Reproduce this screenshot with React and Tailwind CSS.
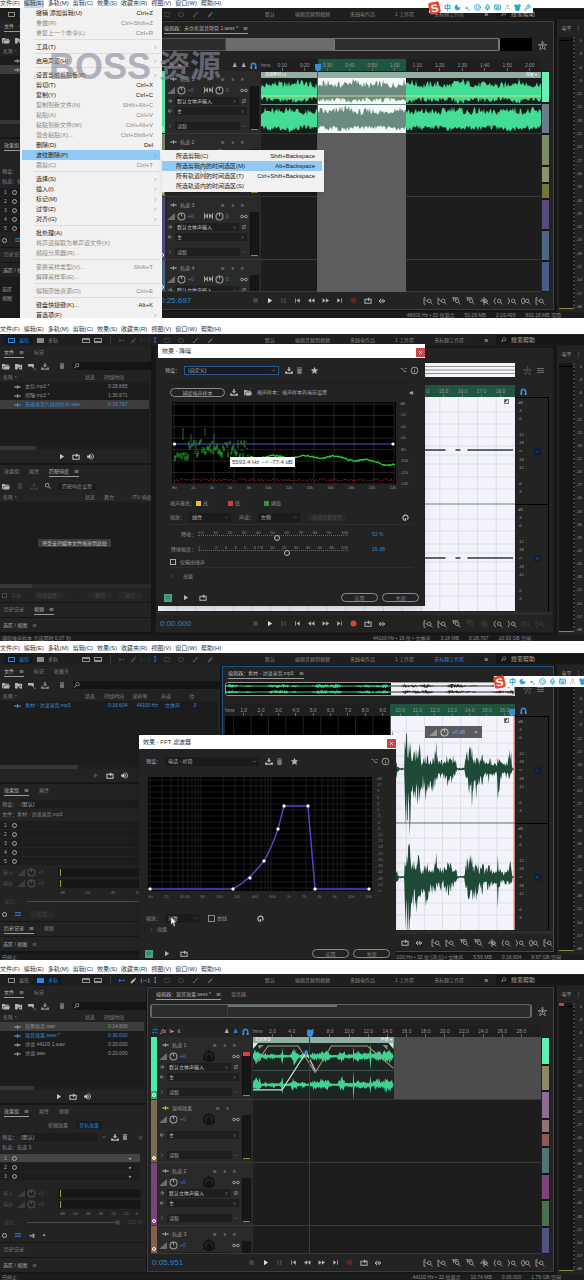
import React from 'react';
import clsx from 'clsx';
import {
  MdFolderOpen,
  MdDelete,
  MdPlayArrow,
  MdStop,
  MdPause,
  MdSkipPrevious,
  MdSkipNext,
  MdFastForward,
  MdFastRewind,
  MdFiberManualRecord,
  MdVolumeUp,
  MdSearch,
  MdStar,
  MdInfoOutline,
  MdMenu,
  MdFileDownload,
  MdEdit,
  MdBrush,
} from 'react-icons/md';
import {
  Moon,
  Smile,
  Mic,
  Keyboard,
  User,
  Shirt,
  Wrench,
  ChevronDown,
  ChevronRight,
  ArrowRight,
  ArrowLeft,
  X,
} from 'lucide-react';

/* ---------- helpers ---------- */

const rand = (n, seed) => {
  const v = Math.sin(n * 12.9898 + seed * 78.233) * 43758.5453;
  return v - Math.floor(v);
};

// env is a list of [x, up, down] points, up and down go from 0 to 1
function envelopePath(env, mid, half, seed, step = 0.7) {
  const top = [];
  const bottom = [];
  const last = env[env.length - 1][0];
  let k = 0;
  for (let x = env[0][0]; x <= last; x += step) {
    while (k < env.length - 2 && x > env[k + 1][0]) k += 1;
    const [x0, u0, d0] = env[k];
    const [x1, u1, d1] = env[k + 1];
    const t = (x - x0) / (x1 - x0 || 1);
    const n = 0.3 + 0.7 * rand(x, seed) ** 1.4;
    const m = 0.3 + 0.7 * rand(x, seed + 11) ** 1.4;
    top.push(`${x.toFixed(1)} ${(mid - Math.max(0.4, (u0 + (u1 - u0) * t) * half * n)).toFixed(1)}`);
    bottom.push(`${x.toFixed(1)} ${(mid + Math.max(0.4, (d0 + (d1 - d0) * t) * half * m)).toFixed(1)}`);
  }
  return `M${top.join('L')}L${bottom.reverse().join('L')}Z`;
}

function bandPath(width, top, bottom, jitter, seed) {
  const a = [];
  const b = [];
  for (let x = 0; x <= width; x += 1) {
    const slow = Math.sin(x / 9 + seed) + Math.sin(x / 4.3 + seed * 2);
    a.push(`${x} ${(top + slow * 1.1 - rand(x, seed) ** 1.6 * jitter).toFixed(1)}`);
    b.push(`${x} ${(bottom - slow * 0.7 + rand(x, seed + 3) ** 1.6 * jitter * 0.7).toFixed(1)}`);
  }
  return `M${a.join('L')}L${b.reverse().join('L')}Z`;
}

const range = (n) => Array.from({ length: n }, (_, i) => i);

/* ---------- small drawings ---------- */

const Knob = ({ className = 'w-[9px] h-[9px]' }) => (
  <svg viewBox="0 0 10 10" className={clsx('shrink-0', className)} fill="none" stroke="currentColor" strokeWidth="1.2">
    <circle cx="5" cy="5" r="3.9" />
    <path d="M5 1v3.6" />
  </svg>
);

const VolumeRamp = () => (
  <svg viewBox="0 0 8 7" className="w-[8px] h-[7px] shrink-0" fill="currentColor">
    <path d="M0 7L8 0V7Z" opacity=".6" />
  </svg>
);

const PanIcon = () => (
  <svg viewBox="0 0 9 6" className="w-[9px] h-[6px] shrink-0" fill="currentColor">
    <path d="M0 0h1v2.5l3-2v5l-3-2V6H0zM9 0H8v2.5l-3-2v5l3-2V6h1z" />
  </svg>
);

const StereoIcon = () => (
  <svg viewBox="0 0 8 5" className="w-[8px] h-[5px] shrink-0" fill="none" stroke="currentColor">
    <circle cx="2" cy="2.5" r="1.3" />
    <circle cx="6" cy="2.5" r="1.3" />
    <path d="M3 2.5h2" />
  </svg>
);

const WaveGlyph = () => (
  <svg viewBox="0 0 7 4" className="w-[7px] h-[4px] shrink-0" stroke="currentColor">
    <path d="M0 2h7M2 1v2M3.5 0v4M5 1v2" strokeWidth=".9" />
  </svg>
);

const FolderIcon = () => (
  <svg viewBox="0 0 9 8" className="w-[8px] h-[7px] shrink-0" fill="currentColor">
    <path d="M0 1h3l1 1h4v1.200H2L.8 7H0z" />
    <path d="M2.400 3.800H9L8 7.300H1.300z" />
  </svg>
);

const ImportIcon = () => (
  <svg viewBox="0 0 9 8" className="w-[8px] h-[7px] shrink-0" fill="currentColor">
    <path d="M0 1h3l1 1h4v5.300H5.500L3 4v3.300H0z" />
    <path d="M4.500 4.200l2 2V4.200z" fill="#232323" />
  </svg>
);

const NewIcon = () => (
  <svg viewBox="0 0 9 8" className="w-[8px] h-[7px] shrink-0" fill="currentColor">
    <path d="M0 1h6.500v5.500L4.200 4H0zM7.500 6.500h1.200v1.200H7.500z" />
  </svg>
);

const TrayIcon = ({ className }) => (
  <svg viewBox="0 0 9 8" className={clsx('w-[8px] h-[7px] shrink-0', className)} fill="currentColor">
    <path d="M3.700 0h1.600v2.600H7L4.500 5.200 2 2.600h1.700zM0 5h2l1 1.200h3L7 5h2v2.800H0z" />
  </svg>
);

const SnapIcon = () => (
  <svg viewBox="0 0 8 8" className="w-[7px] h-[7px] shrink-0" fill="none">
    <path d="M1.500 7.500V4a2.500 2.500 0 0 1 5 0v3.500" stroke="#2f86e0" strokeWidth="1.900" />
    <path d="M.5 7h2M5.500 7h2" stroke="#9fc6f0" strokeWidth="1" />
  </svg>
);

const LoopIcon = () => (
  <svg viewBox="0 0 10 9" className="w-[8px] h-[7px]" fill="none" stroke="currentColor" strokeWidth="1.3">
    <path d="M3 3H1v5h8V3H7M3 3h3M5 1l2.2 2L5 5" />
  </svg>
);

const SkipIcon = () => (
  <svg viewBox="0 0 10 8" className="w-[8px] h-[6px]" fill="none" stroke="currentColor" strokeWidth="1.3">
    <path d="M4 1L1 4l3 3M6 2l3 2-3 2zM1 4h4" />
  </svg>
);

const ResetIcon = () => (
  <svg viewBox="0 0 8 8" className="w-[7px] h-[7px]" fill="none" stroke="currentColor" strokeWidth="1.3">
    <path d="M2 6.5A3 3 0 1 1 6 6.5M4 4.5v2.5H1.8" />
  </svg>
);

const zoomMarks = {
  in: 'M1 1v8M1 1h2M1 9h2M2 3l3 3',
  out: 'M1 1v8M1 1l4 5M1 9h2',
  top: 'M1 1h8M3 1v4M6 1L4 4',
  star: 'M1 5h10M6 0v10M3 2l6 6',
  left: 'M3 1L1 5l2 4',
  right: 'M1 1l2 4-2 4',
  both: 'M2 1L0 5l2 4M3 1l1.5 4L3 9',
};

const ZoomIcon = ({ kind, dim }) => (
  <svg
    viewBox="0 0 12 10"
    className={clsx('w-[10px] h-[8px]', dim ? 'text-[#3d3d3d]' : 'text-[#a0a0a0]')}
    fill="none"
    stroke="currentColor"
    strokeWidth="1.1"
  >
    <path d={zoomMarks[kind]} />
    <circle cx="7.5" cy="4.8" r="2.2" />
    <path d="M9 6.5L11.5 9.3" />
  </svg>
);

const StarBurst = () => (
  <svg viewBox="0 0 10 10" className="w-[9px] h-[9px] shrink-0 text-[#9a9a9a]" fill="none" stroke="currentColor">
    <path d="M5 0l1.200 3.800L9.800 4 7 6.200l1 3.600L5 7.500 2 9.800l1-3.600L.2 4l3.600-.2zM5 3v4M3.500 5h3" strokeWidth=".9" />
  </svg>
);

const SurroundPuck = () => (
  <svg viewBox="0 0 14 14" className="w-[14px] h-[13px] ml-[9px]">
    <circle cx="7" cy="7" r="5.500" fill="#222" stroke="#111" strokeWidth="1.500" />
    <path d="M7 4l3 3.500-1.500 4h-3L4 7.500z" fill="#121212" />
    <circle cx="7" cy="1.500" r="1.200" fill="#111" />
    <circle cx="1.800" cy="10" r="1.200" fill="#111" />
    <circle cx="12.200" cy="10" r="1.200" fill="#111" />
  </svg>
);

const Cursor = ({ className }) => (
  <svg viewBox="0 0 8 12" className={clsx('absolute w-[7px] h-[10px]', className)}>
    <path d="M1 0v9l2-2 1.5 4 1.5-.6L4.500 6.600H7.500Z" fill="#fff" stroke="#555" strokeWidth=".6" />
  </svg>
);

/* ---------- application chrome ---------- */

const menus = ['文件(F)', '编辑(E)', '多轨(M)', '剪辑(C)', '效果(S)', '收藏夹(R)', '视图(V)', '窗口(W)', '帮助(H)'];

function MenuBar({ heightClass, open }) {
  return (
    <nav className={clsx('flex items-end gap-1 bg-white text-[#333] text-[6px] leading-[10px] whitespace-nowrap', heightClass)}>
      {menus.map((m, i) => (
        <button key={m} type="button" className={clsx(open === i && 'bg-[#b9dbf5]')}>
          {m}
        </button>
      ))}
    </nav>
  );
}

const workspaces = ['默认', '编辑音频到视频', '无线电作品', '1 工作区', '无标题工作区'];

function Toolbar({ mode, activeWorkspace }) {
  const modeClass = (m) =>
    clsx('flex items-center gap-1 px-1 h-[9px]', mode === m ? 'text-[#2f86d8] bg-[#121a22]' : 'text-[#8a8a8a]');
  return (
    <div className="flex items-center h-3 bg-[#1f1f1f] whitespace-nowrap">
      <div className="flex items-center w-[265px] shrink-0 pl-1 text-[#8f8f8f]">
        <button type="button" className={modeClass('wave')}>
          <span className="w-[7px] h-[5px] border border-current" />
          波形
        </button>
        <button type="button" className={modeClass('multi')}>
          <span className="w-[7px] h-[5px] bg-current" />
          多轨
        </button>
        <div className="flex items-center gap-1 pl-5 text-[7px]">
          <span className="w-[8px] h-[5px] border border-t-2 border-current" />
          <span className="w-[8px] h-[5px] border border-b-2 border-current" />
          <span className="w-px h-2 mx-1 bg-[#3a3a3a]" />
          <span className={clsx('text-[6px]', mode === 'multi' ? 'text-[#2f86d8]' : 'text-[#4a4a4a]')}>▸+</span>
          <MdEdit className={mode === 'multi' ? 'text-[#ccc]' : 'text-[#4a4a4a]'} />
          <span className={clsx('text-[6px]', mode === 'multi' ? 'text-[#ccc]' : 'text-[#4a4a4a]')}>|↔|</span>
          <span className={clsx('font-serif text-[8px]', mode === 'wave' ? 'text-[#2f86d8]' : 'text-[#999]')}>I</span>
          <span className="w-[6px] h-[5px] ml-1 border border-dashed border-[#3c3c3c]" />
          <span className="w-[6px] h-[5px] ml-1 rounded-full border border-[#4a4a4a]" />
          <MdBrush className="ml-1 text-[#5a5a5a]" />
          <MdEdit className="ml-1 text-[#5a5a5a]" />
        </div>
      </div>
      <div className="flex items-center gap-5 text-[#858585]">
        {workspaces.map((w, i) => (
          <button key={w} type="button" className={clsx(activeWorkspace === i && 'text-[#2f86d8]')}>
            {w}
          </button>
        ))}
        <span className="text-[#ccc] text-[7px]">»</span>
      </div>
      <label className="flex flex-1 items-center gap-1 min-w-0 ml-2 pl-1 h-[10px] bg-[#161616]">
        <MdSearch className="text-[8px] text-[#aaa] -scale-x-100" />
        <input
          type="text"
          placeholder="搜索帮助"
          aria-label="搜索帮助"
          className="w-full bg-transparent outline-none text-[6px] placeholder:text-[#a5a5a5]"
        />
      </label>
    </div>
  );
}

function Tabs({ items, active }) {
  return (
    <div className="flex items-center gap-[10px] h-[14px] shrink-0 pl-1 whitespace-nowrap">
      {items.map((t, i) => (
        <button
          key={t}
          type="button"
          className={clsx(
            'flex items-center gap-[5px] h-[10px] border-b',
            i === active ? 'text-[#b5b5b5] border-[#9a9a9a]' : 'text-[#808080] border-transparent',
          )}
        >
          {t}
          {i === active && <MdMenu className="text-[5px]" />}
        </button>
      ))}
    </div>
  );
}

function StatusBar({ left, values, className }) {
  return (
    <footer className={clsx('flex items-center gap-[10px] h-[6px] bg-[#1c1c1c] text-[#8a8a8a] overflow-hidden', className)}>
      <span className="flex-1 pl-[2px]">{left}</span>
      {values.map((v) => (
        <span key={v}>{v}</span>
      ))}
    </footer>
  );
}

const levels = ['0', ...range(19).map((i) => `-${(i + 1) * 3}`), 'dB'];

function LevelPanel({ clipped }) {
  return (
    <aside className="flex flex-col w-[27px] shrink-0 ml-[3px] bg-[#232323] text-[#9a9a9a]">
      <div className="flex items-center justify-around h-4 shrink-0 pl-[2px]">
        电平 <span>⋮</span>
      </div>
      <div className="flex flex-1 min-h-0 pb-[3px]">
        <div className="flex flex-col w-4 ml-[2px] mt-[1px] bg-[#161616] border-r-2 border-dotted border-[#3f3f3f]">
          <div className={clsx('w-[5px] h-[3px]', clipped && 'bg-[#d33]')} />
          <div className="flex-1 border-t border-black" />
          <div className="h-px bg-[#8e8a3c]" />
        </div>
        <div className="flex flex-1 flex-col justify-between items-end pt-[3px] pr-[2px] text-[4px] leading-[4px]">
          {levels.map((l) => (
            <span key={l}>{l}</span>
          ))}
        </div>
      </div>
    </aside>
  );
}

const imeIcons = [Smile, Mic, Keyboard, User, Shirt, Wrench];

function ImeBar({ className }) {
  return (
    <div className={clsx('absolute flex items-center h-[11px] bg-white text-[#23a6c8]', className)}>
      <span className="flex items-center justify-center w-[11px] h-[12px] mr-1 -rotate-12 rounded-[2px] bg-[#e2492f] text-white text-[11px] leading-none font-bold">
        S
      </span>
      <div className="flex items-center gap-[3px] pr-[2px] text-[7px] font-bold">
        <span>中</span>
        <Moon className="w-[7px] h-[7px] fill-current" />
        <span className="w-[7px] text-center">•,</span>
        {imeIcons.map((Icon, i) => (
          <Icon key={i} className={clsx('w-[7px] h-[7px]', i === 3 && 'text-[#bbb]', i === 4 && 'fill-current')} strokeWidth={3} />
        ))}
      </div>
    </div>
  );
}

/* ---------- left column ---------- */

function FilesPanel({ tabs, files, columns, scroll, playDim }) {
  return (
    <section className="flex flex-col bg-[#232323] border-b-2 border-[#161616] overflow-hidden whitespace-nowrap">
      <Tabs items={tabs} active={0} />
      <div className="flex items-center gap-[5px] h-3 pl-[2px] text-[8px] text-[#b5b5b5]">
        <FolderIcon />
        <ImportIcon />
        <NewIcon />
        <TrayIcon className="text-[#8a8a8a]" />
        <MdDelete className="ml-1 text-[#707070]" />
        <label className="flex flex-1 items-center ml-[2px] h-[8px] bg-[#141414]">
          <MdSearch className="-scale-x-100" />
          <input type="text" aria-label="搜索文件" className="w-full min-w-0 bg-transparent outline-none text-[5px]" />
        </label>
      </div>
      <div className="h-[74px] mr-[2px] bg-[#1c1c1c] overflow-hidden">
        <table className="w-full table-fixed text-left">
          <thead>
            <tr className="h-[10px] text-[#858585] bg-[#222]">
              <th className="w-[85px] pl-[3px] font-normal">名称 ↑</th>
              <th className="w-[19px] font-normal">状态</th>
              {columns.map((c) => (
                <th key={c} className="font-normal">{c}</th>
              ))}
            </tr>
          </thead>
          <tbody>
            {files.map((f) => (
              <tr
                key={f.name}
                className={clsx('h-[9px]', f.selected && 'bg-[#3d3d3d]', f.open ? 'text-[#3a8ddb]' : 'text-[#949494]')}
              >
                <td>
                  <span className="flex items-center gap-1 pl-[14px]">
                    <WaveGlyph />
                    {f.name}
                  </span>
                </td>
                <td />
                {f.values.map((v) => (
                  <td key={v} className="pl-[4px]">{v}</td>
                ))}
              </tr>
            ))}
          </tbody>
        </table>
      </div>
      <div className="flex h-1 bg-[#1f1f1f]">
        <div className={clsx('bg-[#363636]', scroll)} />
      </div>
      <div className="flex items-center justify-center gap-[6px] h-[13px] text-[9px] text-[#c5c5c5]">
        <MdPlayArrow className={clsx(playDim && 'text-[#4a4a4a]')} />
        <LoopIcon />
        <MdVolumeUp />
      </div>
    </section>
  );
}

function LoudnessPanel() {
  return (
    <section className="flex flex-col h-[137px] bg-[#232323] overflow-hidden whitespace-nowrap">
      <Tabs items={['效果组', '属性', '匹配响度']} active={2} />
      <div className="flex items-center gap-[6px] h-[14px] pl-[2px] text-[8px] text-[#b5b5b5]">
        <FolderIcon />
        <MdDelete className="text-[#404040]" />
        <TrayIcon className="text-[#404040]" />
        <MdSearch />
        <button type="button" className="px-1 text-[5px] text-[#8a8a8a] bg-[#1b1b1b]">匹配响度设置</button>
      </div>
      <table className="w-full table-fixed text-left text-[#858585]">
        <thead>
          <tr className="h-[9px]">
            <th className="w-[85px] pl-[3px] font-normal">名称 ↑</th>
            <th className="w-[19px] font-normal">状态</th>
            <th className="w-[28px] font-normal">舞台</th>
            <th className="font-normal">ITU 响度</th>
          </tr>
        </thead>
      </table>
      <div className="flex flex-1 items-center justify-center mr-[2px] bg-[#1c1c1c]">
        <span className="px-1 leading-[8px] rounded-[1px] bg-[#3c3c3c] text-[#c0c0c0]">将受支持媒体文件拖放到此处</span>
      </div>
      <div className="flex h-[4px] bg-[#2b2b2b]">
        <div className="w-8 bg-[#383838]" />
      </div>
      <div className="flex items-center gap-1 h-[14px] pl-[2px] text-[#4a4a4a]">
        <input id="export" type="checkbox" className="appearance-none w-[5px] h-[5px] border border-[#4a4a4a]" />
        <label htmlFor="export">导出</label>
        <button type="button" className="ml-2 px-1 rounded-full bg-[#282828]">导出设置...</button>
        <button type="button" className="ml-auto px-2 rounded-full bg-[#282828]">撤消</button>
        <button type="button" className="mr-2 px-2 rounded-full bg-[#282828]">运行</button>
      </div>
    </section>
  );
}

function RackFader({ label }) {
  return (
    <div className="flex items-center h-[11px] pl-[3px] text-[#4f4f4f]">
      <span className="w-[14px]">{label}</span>
      <VolumeRamp />
      <Knob className="w-[9px] h-[9px] ml-[2px]" />
      <span className="w-[22px] pl-[2px]">+0</span>
      <div className="flex-1 h-[9px] mr-[5px] border border-[#1a1a1a] bg-[#161616]">
        <div className="w-px h-full ml-px bg-[#a8a02c]" />
      </div>
    </div>
  );
}

function EffectsRack({ tabs, toggle, source, rows, selected, compact }) {
  return (
    <section className={clsx('flex flex-col bg-[#232323] overflow-hidden whitespace-nowrap', !compact && 'h-[137px]')}>
      <Tabs items={tabs} active={0} />
      {toggle && (
        <div className="flex items-center justify-center gap-1 h-3 text-[#888]">
          <button type="button" className="px-1">剪辑效果</button>
          <button type="button" className="px-[3px] leading-[8px] bg-[#141c26] text-[#2f86d8]">音轨效果</button>
        </div>
      )}
      <div className="flex items-center h-3 pl-[2px] text-[#888]">
        <label htmlFor={`preset-${source}`}>预设：</label>
        <select
          id={`preset-${source}`}
          className="flex-1 min-w-0 ml-1 h-[8px] leading-[8px] appearance-none bg-[#1c1c1c] text-[#aaa]"
        >
          <option>(默认)</option>
        </select>
        <ChevronDown className="w-[6px] h-[6px] mx-1" />
        <TrayIcon className="text-[#b0b0b0]" />
        <MdDelete className="ml-[2px] text-[8px]" />
        <MdStar className="ml-2 mr-[2px] text-[7px] text-[#444]" />
      </div>
      <p className="h-[9px] leading-[9px] pl-[2px] text-[#8a8a8a]">{source}</p>
      <ol className="flex-1 mt-[2px] mr-[6px] overflow-hidden">
        {range(rows).map((i) => (
          <li
            key={i}
            className={clsx(
              'flex items-center gap-[5px] h-[9px] pl-1 border-b border-[#232323] text-[#a5a5a5]',
              i === selected ? 'bg-[#454545]' : 'bg-[#1d1d1d]',
            )}
          >
            <span>{i + 1}</span>
            <span className="w-[5px] h-[5px] rounded-full border border-current" />
            <span className="ml-auto pr-2">▸</span>
          </li>
        ))}
      </ol>
      {!compact && (
        <>
          <RackFader label="输入" />
          <RackFader label="输出" />
          <div className="flex justify-between h-[7px] pl-[60px] pr-2 text-[4px] text-[#777]">
            {['dB', '-54', '-48', '-36', '-24', '-12', '0'].map((t) => (
              <span key={t}>{t}</span>
            ))}
          </div>
          <div className="flex items-center gap-2 h-[11px] px-1 text-[#484848]">
            混合：
            <input
              type="range"
              aria-label={`混合 ${source}`}
              defaultValue="100"
              className="flex-1 min-w-0 h-px appearance-none bg-[#4a4a4a] [&::-webkit-slider-thumb]:appearance-none [&::-webkit-slider-thumb]:w-[5px] [&::-webkit-slider-thumb]:h-[5px] [&::-webkit-slider-thumb]:rounded-full [&::-webkit-slider-thumb]:bg-[#444]"
            />
            100 %
          </div>
        </>
      )}
      <div className="flex items-center gap-[7px] h-[14px] pl-[2px] text-[#aaa]">
        <span className="w-[5px] h-[5px] rounded-full border border-current" />
        <MdMenu className="text-[8px] text-[#2f86d8]" />
        {toggle ? (
          <>
            <span>◂▮</span>
            <span>✦</span>
          </>
        ) : (
          <button type="button" className="px-2 rounded-full bg-[#292929] text-[#444]">应用</button>
        )}
      </div>
    </section>
  );
}

function BottomTabs({ tabs, active }) {
  return (
    <div className="whitespace-nowrap overflow-hidden">
      <div className="mt-px bg-[#232323]">
        <Tabs items={tabs} active={active} />
      </div>
      <div className="flex items-center gap-[5px] h-[14px] mt-px pl-[3px] bg-[#232323] text-[#aaa]">
        选区 / 视图 <MdMenu className="text-[#777]" />
      </div>
    </div>
  );
}

/* ---------- editors ---------- */

function Transport({ time, dimFrom = 9, recordActive, className }) {
  const kinds = ['in', 'out', 'top', 'top', 'star', 'left', 'right', 'both', 'in'];
  const buttons = [
    ['停止', <MdStop className="text-[#484848]" />],
    ['播放', <MdPlayArrow className="text-[#ddd]" />],
    ['暂停', <MdPause className="text-[#484848]" />],
    ['上一个', <MdSkipPrevious />],
    ['快退', <MdFastRewind />],
    ['快进', <MdFastForward />],
    ['下一个', <MdSkipNext />],
    ['录制', <MdFiberManualRecord className={recordActive ? 'text-[#e0433c]' : 'text-[#5e2420]'} />],
    ['循环', <LoopIcon />],
    ['跳过', <SkipIcon />],
  ];
  return (
    <div className={clsx('flex items-center h-[17px] overflow-hidden', className)}>
      <span className="w-[56px] shrink-0 pl-[2px] text-[8px] text-[#2f86d8]">{time}</span>
      <div className="flex flex-1 justify-center gap-[5px] text-[9px] text-[#b0b0b0]">
        {buttons.map(([label, icon]) => (
          <button key={label} type="button" aria-label={label} className="flex items-center justify-center w-[9px] h-[9px] shrink-0">
            {icon}
          </button>
        ))}
      </div>
      <div className="flex gap-1 shrink-0">
        {kinds.map((k, i) => (
          <ZoomIcon key={i} kind={k} dim={(i >= dimFrom && i < dimFrom + 2) || (dimFrom < 9 && i > 6)} />
        ))}
      </div>
    </div>
  );
}

function Ruler({ labels, tail, selection, marker }) {
  return (
    <div className="relative flex flex-1 h-3 bg-[#1f1f1f] text-[#969696] text-[5px] leading-[6px] overflow-hidden">
      {selection && (
        <div
          className="absolute inset-y-0 bg-[#1f5640]"
          style={{ left: `${selection[0]}%`, width: `${selection[1] - selection[0]}%` }}
        />
      )}
      <span className="relative w-[10px] shrink-0 pt-[3px]">hms</span>
      {labels.map((l) => (
        <span key={l} className="relative flex flex-1 flex-col items-center justify-end min-w-0">
          {l}
          <span className="w-px h-[3px] bg-[#6a6a6a]" />
        </span>
      ))}
      <span className={clsx('shrink-0', tail)} />
      {marker !== undefined && (
        <div className="absolute bottom-0 w-[6px] h-[7px] -ml-[3px] rounded-t-[1px] rounded-b-full bg-[#3b8be0]" style={{ left: `${marker}%` }} />
      )}
    </div>
  );
}

function Track({ track, surround, clip }) {
  const { name, strip, stripBody, dot, bus, height = 'h-[63px]' } = track;
  return (
    <div className={clsx('flex shrink-0 overflow-hidden border-b border-[#383838]', height)}>
      <div className={clsx('flex flex-col justify-between items-center w-[6px] shrink-0', strip)}>
        <span className={clsx('w-full flex-1', stripBody)} />
        <span className={clsx('w-[4px] h-[4px] my-[2px] rounded-full border border-white', dot)} />
      </div>
      <div className="w-[96px] shrink-0 flex bg-[#2a2a2a] text-[#9a9a9a]">
        <div className="flex flex-col w-[84px] pl-[2px] pt-[3px]">
          <div className="flex items-center h-[10px] shrink-0 pl-[3px]">
            <span className={clsx(bus && 'text-[#d6b52a]')}><WaveGlyph /></span>
            <span className="pl-[3px]">{name}</span>
            <span className="ml-auto flex gap-[7px] pr-[5px] text-[4px]">
              <span>M</span>
              <span>S</span>
              <span>{bus ? '' : 'R'}</span>
            </span>
          </div>
          <div className="flex items-center gap-[2px] h-[12px] shrink-0">
            <VolumeRamp />
            <Knob />
            <span className="w-[11px] text-[#2f86d8]">+0</span>
            {surround ? (
              <SurroundPuck />
            ) : (
              <>
                <span className="ml-[3px]"><PanIcon /></span>
                <Knob />
                <span className="text-[#2f86d8]">0</span>
              </>
            )}
            <span className="ml-auto pr-px"><StereoIcon /></span>
          </div>
          {!bus && (
            <div className="flex items-center h-[10px] shrink-0">
              <ArrowRight className="w-[6px] h-[6px]" strokeWidth={3} />
              <button type="button" className="flex flex-1 items-center justify-between h-[8px] ml-[2px] px-[2px] bg-[#1e1e1e] text-[#c5c5c5]">
                默认立体声输入
                <ChevronRight className="w-[5px] h-[5px]" />
              </button>
              <span className="w-[10px] text-center">Ø</span>
            </div>
          )}
          <div className={clsx('flex items-center h-[10px] shrink-0', bus && 'mt-[5px]')}>
            <ArrowLeft className="w-[6px] h-[6px]" strokeWidth={3} />
            <button type="button" className="flex flex-1 items-center justify-between h-[8px] mx-[2px] px-[2px] bg-[#1e1e1e] text-[#c5c5c5]">
              主
              <ChevronRight className="w-[5px] h-[5px]" />
            </button>
          </div>
          <div className="flex items-center h-[10px] shrink-0 mt-auto mb-[2px]">
            <ChevronRight className="w-[6px] h-[6px]" />
            <select aria-label={`${name} 自动化`} className="flex-1 min-w-0 h-[8px] leading-[8px] ml-[2px] px-[2px] appearance-none bg-[#1e1e1e] text-[#aaa]">
              <option>读取</option>
            </select>
            <ChevronDown className="w-[5px] h-[5px] mx-[2px]" />
          </div>
        </div>
        <div className="flex flex-col w-[9px] h-[44px] shrink-0 mt-[15px] ml-px bg-[#171717] border-x border-[#111]">
          {clip && surround && <span className="h-1 bg-[#e03a48]" />}
          <span className="h-px mt-auto bg-[#8e8a3c]" />
        </div>
      </div>
      <div className="flex-1 min-w-0 bg-[#1d1d1d]">{clip}</div>
    </div>
  );
}

function MultitrackEditor({ tabs, overview, toolsActive, ruler, tracks, surround, clip, segments, listHeight, overlay, time }) {
  return (
    <main className="flex flex-1 flex-col min-w-0 mt-px mb-[2px] bg-[#232323] border border-[#24416b]">
      <div className="h-4 pl-1">
        <Tabs items={tabs} active={0} />
      </div>
      <div className="flex items-center">
        {overview}
        <span className="w-[21px] flex justify-center"><StarBurst /></span>
      </div>
      <div className="flex mt-[7px]">
        <div className="flex items-center gap-[3px] w-[105px] shrink-0 pl-1 text-[#b0b0b0] text-[6px]">
          <span className={clsx(toolsActive && 'text-[#2f86d8]')}>⇄</span>
          <span className="font-serif italic text-[7px]">fx</span>
          <span>ŀ▸</span>
          <span>ıl.</span>
          <span className="flex items-center gap-1 ml-auto pr-1">
            <span>♟</span>
            <span className={clsx(toolsActive && 'text-[#2f86d8]')}>♟</span>
            <SnapIcon />
          </span>
        </div>
        {ruler}
        <span className="w-3 shrink-0" />
      </div>
      <div className={clsx('flex pl-[3px]', listHeight)}>
        <div className="relative flex flex-col flex-1 min-w-0 overflow-hidden bg-[#1d1d1d]">
          {tracks.map((t, i) => (
            <Track key={t.name} track={t} surround={surround} clip={i === 0 ? clip : null} />
          ))}
          <div className="absolute inset-y-0 left-[102px] right-0 pointer-events-none">{overlay}</div>
        </div>
        <div className="flex flex-col gap-[2px] w-[7px] pt-px pb-px ml-px mr-[4px] bg-[#151515]">
          {segments.map(([grow, color], i) => (
            <span key={i} className={color} style={{ flexGrow: grow, flexBasis: 0 }} />
          ))}
        </div>
      </div>
      <Transport time={time} className="pl-[2px] pr-[8px]" />
    </main>
  );
}

const scaleMarks = ['dB', '-3', '-6', '', '-12', '-18', '-∞', '-18', '-12', '', '-6', '-3'];

function AmplitudeScale({ channel }) {
  return (
    <div className="flex flex-1 border-t border-black text-[#9a9a9a]">
      <div className="flex flex-col justify-between w-[12px] pt-[2px] pb-[10px] pl-[3px] text-[4px] leading-[5px]">
        {scaleMarks.map((m, i) => (
          <span key={i} className="h-[5px]">{m}</span>
        ))}
      </div>
      <span className="m-auto px-[2px] rounded-[1px] bg-[#101c30] text-[#2f6fb5] text-[4px]">{channel}</span>
    </div>
  );
}

function WaveEditor({ title, overview, ruler, view, time, focused, transport, dimFrom, recordActive }) {
  return (
    <main
      className={clsx(
        'flex flex-1 flex-col min-w-0 mt-px mb-[2px] bg-[#232323] border',
        focused ? 'border-[#24517c]' : 'border-[#1a1a1a]',
      )}
    >
      <div className="h-[15px] pl-px whitespace-nowrap">
        <Tabs items={[title]} active={0} />
      </div>
      <div className="flex items-center">
        <div className="flex-1 h-[14px] ml-[2px]">{overview}</div>
        <div className="flex items-center gap-[4px] w-[38px] pl-2 text-[#888]">
          <span className="opacity-40"><StarBurst /></span>
          <MdMenu className="text-[9px]" />
        </div>
      </div>
      <div className="flex mt-[8px] ml-[2px]">
        {ruler}
        <span className="flex items-center w-[38px] pl-[5px]">
          <SnapIcon />
        </span>
      </div>
      <div className="flex h-[214px] ml-[2px]">
        <div className="relative flex-1 min-w-0">{view}</div>
        <div className="flex flex-col w-[34px] mr-1 border-r border-black">
          <AmplitudeScale channel="L" />
          <AmplitudeScale channel="R" />
        </div>
      </div>
      <div className="h-[3px] mt-px bg-[#2c2c2c]" />
      <Transport time={time} dimFrom={dimFrom} recordActive={recordActive} className={transport} />
    </main>
  );
}

function LightGrid({ columns }) {
  return (
    <g stroke="#dedee8" strokeWidth="1">
      {range(columns).map((i) => (
        <path key={`v${i}`} d={`M${(i + 1) * (360 / columns)} 0V214`} vectorEffect="non-scaling-stroke" />
      ))}
      {[15, 27, 40, 49, 58, 67, 80, 92, 122, 134, 147, 156, 165, 174, 187, 199].map((y) => (
        <path key={y} d={`M0 ${y}H360`} vectorEffect="non-scaling-stroke" />
      ))}
    </g>
  );
}

const CornerHandle = () => (
  <span className="absolute right-[6px] top-[2px] w-[5px] h-[5px] border border-[#777] bg-[linear-gradient(135deg,#444_50%,#ddd_50%)]" />
);

/* ---------- dialogs ---------- */

function Dialog({ title, className, children }) {
  return (
    <div role="dialog" aria-label={title} className={clsx('absolute flex flex-col bg-[#232323] text-[#8f8f8f] shadow-lg whitespace-nowrap', className)}>
      <div className="flex items-start justify-between h-[14px] shrink-0 bg-white text-[#333] text-[6px] leading-[14px]">
        <span className="pl-1">{title}</span>
        <button type="button" aria-label="关闭窗口" className="flex items-center justify-center w-[9px] h-[9px] mt-1 bg-[#c9474b] text-white">
          <X className="w-[5px] h-[5px]" strokeWidth={3} />
        </button>
      </div>
      {children}
    </div>
  );
}

function Dropdown({ id, label, value, className }) {
  return (
    <>
      <label htmlFor={id}>{label}</label>
      <span className={clsx('flex items-center h-[9px] ml-1 pr-[2px] bg-[#1b1b1b]', className)}>
        <select id={id} className="flex-1 min-w-0 h-[7px] leading-[7px] pl-[3px] appearance-none bg-transparent text-[#b5b5b5] outline-none">
          <option>{value}</option>
        </select>
        <ChevronDown className="w-[5px] h-[5px]" />
      </span>
    </>
  );
}

function DialogPreset({ id, value, className }) {
  return (
    <div className="flex items-center h-6 pl-[7px] pr-[6px] text-[9px] text-[#b5b5b5]">
      <div className="flex items-center text-[5px]">
        <Dropdown id={id} label="预设：" value={value} className={className} />
      </div>
      <span className="ml-[6px]"><TrayIcon /></span>
      <MdDelete className="ml-[2px] text-[#777]" />
      <MdStar className="ml-[6px]" />
      <span className="ml-auto mr-[3px] text-[6px]">⌥</span>
      <MdInfoOutline />
    </div>
  );
}

function DialogFooter({ className }) {
  const pill = 'w-[37px] h-[9px] rounded-full border border-[#8a8a8a] leading-[6px]';
  return (
    <div className={clsx('flex items-center gap-[9px] h-[17px] mt-auto px-[6px] text-[9px] text-[#b5b5b5]', className)}>
      <span className="flex items-center justify-center w-[8px] h-[8px] bg-[#42a385] text-[5px] text-[#17483a]">⏻</span>
      <MdPlayArrow />
      <LoopIcon />
      <div className="flex gap-[4px] ml-auto text-[5px] text-[#8a8a8a]">
        <button type="button" className={pill}>应用</button>
        <button type="button" className={pill}>关闭</button>
      </div>
    </div>
  );
}

const spectrum = range(146).map((i) => {
  const x = 78 + i;
  const drop = x > 160 ? (x - 160) * 0.12 : 0;
  return `${x} ${(54 + drop + Math.sin(i / 5) * 1.2 + rand(i, 2) * 1.5 + (x > 208 ? 1 : 0)).toFixed(1)}`;
});

function NoiseGraph() {
  return (
    <svg viewBox="0 0 224 82" preserveAspectRatio="none" className="w-full h-[82px] bg-black">
      <g stroke="#333" strokeWidth=".7">
        {range(12).map((i) => <path key={`v${i}`} d={`M${2 + i * 20} 0V82`} />)}
        {range(8).map((i) => <path key={`h${i}`} d={`M0 ${2 + i * 11.4}H222`} />)}
      </g>
      <path d={`M2 ${82 - 3}` + range(220).map((i) => `L${2 + i} ${(79.5 - rand(i, 5) * 3).toFixed(1)}`).join('')} fill="none" stroke="#9c1f22" strokeWidth=".9" strokeDasharray="2 1" />
      <g stroke="#25b52b" strokeWidth="1">
        {range(74).map((i) => {
          const x = 3 + i;
          const peak = (x > 16 && x < 34) || (x > 60 && x < 76) ? 16 : x > 34 ? 12 : 4;
          const y = 54 - rand(i, 7) * peak + (x > 25 && x < 60 ? -4 : 0);
          return <path key={i} d={`M${x} ${y}v${(1 + rand(i, 9) * 5).toFixed(1)}`} />;
        })}
        {[11, 19, 24, 33, 42, 66].map((x, i) => (
          <path key={x} d={`M${x} ${26 + (i % 3) * 6}v${12 - (i % 2) * 4}`} stroke="#1b6e2a" />
        ))}
      </g>
      <path d={`M${spectrum.join('L')}`} fill="none" stroke="#27d42c" strokeWidth="1.3" />
      <path d="M2 42H221" stroke="#5252c8" strokeWidth="1.2" />
      <circle cx="2.500" cy="42" r="1.600" fill="#fff" />
      <circle cx="221" cy="42" r="1.600" fill="#fff" />
    </svg>
  );
}

function DialogSlider({ id, label, ticks, value, display }) {
  return (
    <div className="flex items-center h-[15px]">
      <label htmlFor={id} className="w-[28px] pr-[2px] text-right">{label}</label>
      <div className="flex flex-col w-[150px]">
        <div className="flex justify-between text-[4px] leading-[5px]">
          {ticks.map((t, i) => (
            <span key={i}>{t}</span>
          ))}
        </div>
        <input
          id={id}
          type="range"
          defaultValue={value}
          className="w-full h-[5px] appearance-none bg-transparent border-t border-dotted border-[#666] [&::-webkit-slider-thumb]:appearance-none [&::-webkit-slider-thumb]:w-[6px] [&::-webkit-slider-thumb]:h-[6px] [&::-webkit-slider-thumb]:rounded-full [&::-webkit-slider-thumb]:border [&::-webkit-slider-thumb]:border-solid [&::-webkit-slider-thumb]:border-[#bbb] [&::-webkit-slider-thumb]:bg-[#232323]"
        />
      </div>
      <span className="pl-6 text-[#3583c9]">{display}</span>
    </div>
  );
}

function NoiseDialog() {
  return (
    <Dialog title="效果 - 降噪" className="left-[158px] top-[26px] w-[267px] h-[262px]">
      <DialogPreset id="noise-preset" value="(自定义)" className="w-[95px] border border-[#2b5590]" />
      <div className="flex items-center h-[20px] ml-3 mr-3 border-t border-[#1b1b1b] text-[#b5b5b5]">
        <button type="button" className="w-[55px] h-[9px] mr-[5px] rounded-full border border-[#8a8a8a] leading-[6px] text-[#aaa]">捕捉噪声样本</button>
        <TrayIcon />
        <span className="ml-[6px]"><FolderIcon /></span>
        <span className="pl-[5px] text-[#aaa]">噪声样本：噪声样本的当前设置</span>
        <span className="ml-auto text-[4px] text-[#bbb]">◂▮</span>
      </div>
      <div className="flex ml-[14px] mr-3">
        <div className="w-[224px]">
          <NoiseGraph />
          <div className="flex justify-between h-[8px] text-[4px] leading-[8px]">
            {['Hz', '2k', '4k', '6k', '8k', '10k', '12k', '14k', '16k', '18k', '20k', '22k'].map((t) => (
              <span key={t}>{t}</span>
            ))}
          </div>
        </div>
        <div className="flex flex-col justify-between h-[84px] pl-1 text-[4px] leading-[4px]">
          {['dB', '-20', '-40', '-60', '-80', '-100', '-120', '-140'].map((t) => (
            <span key={t}>{t}</span>
          ))}
        </div>
      </div>
      <div className="flex items-center h-[15px] mt-1 pl-3">
        噪声基底：
        <span className="w-[5px] h-[5px] ml-px mr-[2px] bg-[#e8bd3c]" />高
        <span className="w-[5px] h-[5px] ml-5 mr-[2px] bg-[#d83a3a]" />低
        <span className="w-[5px] h-[5px] ml-6 mr-[2px] bg-[#2b9a35]" />阈值
      </div>
      <div className="flex items-center h-[13px] pl-3 pr-4">
        <Dropdown id="noise-scale" label="缩放：" value="线性" className="w-[42px]" />
        <span className="w-2" />
        <Dropdown id="noise-channel" label="声道：" value="左侧" className="w-[42px]" />
        <button type="button" className="ml-2 px-1 rounded-full bg-[#2a2a2a] text-[#4a4a4a]">选择完整文件</button>
        <span className="ml-auto text-[#bbb]"><ResetIcon /></span>
      </div>
      <div className="mx-3 pt-[2px] border-t border-[#2e2e2e]">
        <DialogSlider
          id="noise-reduce"
          label="降噪："
          ticks={['0 0', '10', '20', '30', '40', '50', '60', '70', '80', '90', '100']}
          value="53"
          display="53 %"
        />
        <DialogSlider
          id="noise-amount"
          label="降噪幅度："
          ticks={['1', '', '2', '3', '4', '5', '6 7 8', '10', '20', '30', '40', '60', '80', '100']}
          value="60"
          display="16 dB"
        />
      </div>
      <div className="flex items-center gap-1 h-[10px] pl-3">
        <input id="noise-only" type="checkbox" className="appearance-none w-[6px] h-[6px] border border-[#aaa]" />
        <label htmlFor="noise-only">仅输出噪声</label>
      </div>
      <button type="button" className="flex items-center gap-2 h-[18px] mx-3 border-t border-[#2e2e2e]">
        <ChevronRight className="w-[5px] h-[5px]" />
        高级
      </button>
      <DialogFooter />
      <div className="absolute left-[72px] top-[113px] px-[2px] bg-white text-[#444] text-[6px] leading-[10px]">
        5593.4 Hz --&gt; -77.4 dB
      </div>
    </Dialog>
  );
}

const fftPoints = [[2, 112], [85, 112], [102, 101], [116, 84], [130, 52], [136, 29], [160, 29], [167, 112], [221, 112]];
const fftLines = [2, 14, 23, 30, 35, 40, 44, 47, 50, 53, 75, 87, 96, 103, 108, 113, 117, 120, 123, 145, 158, 167, 174, 180, 185, 189, 193, 196, 218];

function FftDialog() {
  return (
    <Dialog title="效果 - FFT 滤波器" className="left-[139px] top-[94px] w-[257px] h-[224px]">
      <DialogPreset id="fft-preset" value="电话 - 听筒" className="w-[94px]" />
      <div className="flex ml-[9px] mt-[4px]">
        <div className="w-[224px]">
          <svg viewBox="0 0 224 114" className="w-full h-[114px] bg-black">
            <g stroke="#252525" strokeWidth=".7">
              {fftLines.map((x) => <path key={x} d={`M${x} 0V114`} />)}
              {range(19).map((i) => <path key={i} d={`M0 ${3 + i * 6}H224`} />)}
            </g>
            <path d="M2 112H85Q100 104 116 84Q124 70 130 52L136 29H160L167 112H221" fill="none" stroke="#4a4ac4" strokeWidth="1.500" />
            {fftPoints.map(([x, y]) => (
              <rect key={x} x={x - 1.5} y={y - 1.5} width="3" height="3" rx="1" fill="#fff" />
            ))}
          </svg>
          <div className="flex justify-between h-[12px] text-[4px] leading-[12px] text-[#777]">
            {['Hz', '20', '40 60', '80', '100', '200', '400', '600', '1k', '2k', '4k', '6k', '10k', '20k'].map((t) => (
              <span key={t}>{t}</span>
            ))}
          </div>
        </div>
        <div className="flex flex-col justify-between h-[116px] pl-[5px] text-[4px] leading-[4px] text-[#777]">
          {['dB', '12', '9', '6', '3', '0', '-3', '-6', '-9', '-12', '-15', '-18', '-24', '-30', '-36', '-42', '-48', '-54', '-∞'].map((t) => (
            <span key={t}>{t}</span>
          ))}
        </div>
      </div>
      <div className="flex items-center h-[14px] mt-2 pl-[7px]">
        <Dropdown id="fft-scale" label="缩放：" value="对数" className="w-[35px]" />
        <input id="fft-curve" type="checkbox" className="appearance-none w-[7px] h-[7px] ml-[8px] border border-[#888]" />
        <label htmlFor="fft-curve" className="pl-[2px]">曲线</label>
        <span className="ml-[30px] text-[#bbb]"><ResetIcon /></span>
      </div>
      <button type="button" className="flex items-center gap-[3px] pl-[10px] pt-px">
        <ChevronRight className="w-[5px] h-[5px]" />
        高级
      </button>
      <DialogFooter className="mb-[-3px]" />
      <Cursor className="left-[31px] top-[182px]" />
    </Dialog>
  );
}

/* ---------- edit menu ---------- */

const editMenu = [
  ['撤销 添加剪辑(U)', 'Ctrl+Z'],
  ['重做(R)', 'Ctrl+Shift+Z', 'off'],
  ['重复上一个命令(L)', 'Ctrl+R', 'off'],
  null,
  ['工具(T)', '>'],
  null,
  ['启用声道(H)', '>'],
  null,
  ['设置当前剪贴板(B)', '>'],
  ['剪切(T)', 'Ctrl+X'],
  ['复制(Y)', 'Ctrl+C'],
  ['复制到新文件(N)', 'Shift+Alt+C', 'off'],
  ['粘贴(A)', 'Ctrl+V', 'off'],
  ['粘贴到新文件(W)', 'Ctrl+Alt+V', 'off'],
  ['混合粘贴(X)...', 'Ctrl+Shift+V', 'off'],
  ['删除(D)', 'Del'],
  ['波纹删除(P)', '>', 'hot'],
  ['裁剪(C)', 'Ctrl+T', 'off'],
  null,
  ['选择(S)', '>'],
  ['插入(I)', '>'],
  ['标记(M)', '>'],
  ['过零(Z)', '>'],
  ['对齐(G)', '>'],
  null,
  ['批处理(A)', ''],
  ['将声道提取为单声道文件(X)', '', 'off'],
  ['频段分离器(R)...', '', 'off'],
  null,
  ['变换采样类型(V)...', 'Shift+T', 'off'],
  ['解释采样率(E)...', '', 'off'],
  null,
  ['编辑原始资源(O)', 'Ctrl+E', 'off'],
  null,
  ['键盘快捷键(K)...', 'Alt+K'],
  ['首选项(F)', '>'],
];

const rippleMenu = [
  ['所选剪辑(C)', 'Shift+Backspace'],
  ['所选剪辑内的时间选区(M)', 'Alt+Backspace', 'hot'],
  ['所有轨道内的时间选区(T)', 'Ctrl+Shift+Backspace'],
  ['所选轨道内的时间选区(S)', ''],
];

function PopupMenu({ items, className }) {
  return (
    <ul role="menu" className={clsx('absolute bg-[#f1f1f1] text-[6px] leading-[10px] text-[#222] whitespace-nowrap', className)}>
      {items.map((item, i) =>
        item ? (
          <li key={item[0]}>
            <button
              type="button"
              role="menuitem"
              className={clsx(
                'flex items-center w-full h-[10px] pl-[14px]',
                item[2] === 'hot' && 'bg-[#91c9f7]',
                item[2] === 'off' && 'text-[#8a8a8a]',
              )}
            >
              {item[0]}
              {item[1] === '>' ? (
                <ChevronRight className="w-[5px] h-[5px] ml-auto mr-[2px] text-[#666]" />
              ) : (
                <span className="ml-auto pr-[7px]">{item[1]}</span>
              )}
            </button>
          </li>
        ) : (
          <li key={`sep${i}`} role="separator" className="h-1 ml-3 py-[1px]">
            <div className="h-px bg-[#dcdcdc]" />
          </li>
        ),
      )}
    </ul>
  );
}

/* ---------- screens ---------- */

const denseTracks = [
  { name: '轨道 1', strip: 'bg-[#55e8a5]', dot: 'bg-[#55e8a5]' },
  { name: '轨道 2', strip: 'bg-[#7d8a65]', dot: 'bg-[#7d8a65]' },
  { name: '轨道 3', strip: 'bg-[#564a80]', dot: 'bg-[#564a80]' },
  { name: '轨道 4', strip: 'bg-[#4c6885]', dot: 'bg-[#4c6885]', height: 'h-[32px]' },
];

function DenseClip() {
  const ch1 = bandPath(280, 9, 20, 7, 1);
  const ch2 = bandPath(280, 36, 48, 7, 2);
  return (
    <div className="flex flex-col h-full pt-px">
      <div className="flex justify-between h-[6px] px-1 bg-[#93ada2] text-[4px] leading-[6px] text-white">
        <span>音频素材 01</span>
        <span>音量 ▾</span>
      </div>
      <svg viewBox="0 0 280 55" preserveAspectRatio="none" className="w-full flex-1 min-h-0 bg-[#141d19]">
        <clipPath id="picked">
          <rect x="57" width="88" height="55" />
        </clipPath>
        <path d={ch1} fill="#43dd95" />
        <path d={ch2} fill="#43dd95" />
        <g clipPath="url(#picked)">
          <rect x="57" width="88" height="55" fill="#f2fbf8" />
          <path d={ch1} fill="#6b8b7f" />
          <path d={ch2} fill="#6b8b7f" />
        </g>
        <path d="M0 18H280" stroke="#c9dc8a" strokeWidth="1" />
        <path d="M0 26.500H280" stroke="#6f8880" strokeWidth="1" />
      </svg>
    </div>
  );
}

function MenuScreen() {
  return (
    <div className="relative overflow-hidden bg-[#161616]">
      <MenuBar heightClass="h-2" open={1} />
      <Toolbar mode="multi" />
      <div className="flex">
        <div className="flex flex-col w-[152px] mr-[3px] shrink-0">
          <FilesPanel
            tabs={['文件', '标记']}
            columns={['持续时间']}
            files={[{ name: '素材 01.mp3', values: ['2:19.499'] }, { name: '未命名.sesx *', values: ['2:19.499'], selected: true }]}
            scroll="w-9"
          />
          <EffectsRack tabs={['效果组', '属性']} toggle source="轨道：轨道 1" rows={5} compact />
          <BottomTabs tabs={['历史记录', '视频']} active={-1} />
          <div className="flex-1 pt-[8px] pl-[2px] bg-[#1c1c1c] text-[#999] leading-[9px]">
            <p>选区</p>
            <p>视图</p>
          </div>
        </div>
        <MultitrackEditor
          tabs={['编辑器：未命名混音项目 1.sesx *']}
          overview={
            <div className="flex flex-1 h-[13px] ml-1 mb-px">
              <div className="w-[66px] bg-[#2d2d2d] border border-[#555] border-r-[#8a2a2a]" />
              <div className="w-[108px] bg-[#6c6c6c]" />
              <div className="flex-1 bg-[#2f2f2f] border border-r-2 border-[#777] rounded-r-[2px]" />
              <div className="w-[32px] bg-black" />
            </div>
          }
          ruler={
            <Ruler
              labels={['0:10', '0:20', '0:30', '0:40', '0:50', '1:00', '1:10', '1:20', '1:30', '1:40', '1:50', '2:00']}
              selection={[20.4, 51.8]}
              marker={20.4}
            />
          }
          tracks={denseTracks}
          clip={<DenseClip />}
          listHeight="h-[221px]"
          overlay={
            <div className="flex h-full pt-[62px]">
              <div className="w-[20.4%] -mt-[62px] border-r border-[#b03434]" />
              <div className="w-[31.4%] bg-[#5e5e60]" />
            </div>
          }
          segments={[
            [31, 'bg-[#69efb4]'],
            [30, 'bg-[#6b7d8a]'],
            [31, 'bg-[#7e8b64]'],
            [15, 'bg-[#8b9468]'],
            [14, 'bg-[#75743f]'],
            [30, 'bg-[#564a80]'],
            [30, 'bg-[#4c6885]'],
            [30, 'bg-[#4a5a8a]'],
          ]}
          time="0:25.697"
        />
        <LevelPanel />
      </div>
      <StatusBar left="" values={['48000 Hz • 32 位混合', '51.09 MB', '2:19.499', '832.18 MB 可用']} className="pr-[23px]" />
      <PopupMenu items={editMenu} className="left-[20px] top-[8px] w-[142px] px-[2px] shadow-md" />
      <PopupMenu items={rippleMenu} className="left-[162px] top-[150px] w-[162px] py-[1px] pr-[2px] shadow-md" />
      <Cursor className="left-[200px] top-[168px]" />
      <ImeBar className="left-[429px] top-[2px]" />
      <div className="absolute left-[49px] top-[46px] flex items-center gap-2 text-[#8c8c9c]/65 font-bold leading-[42px] whitespace-nowrap pointer-events-none">
        <span className="text-[36px]">BOSS</span>
        <span className="text-[31px]">资源</span>
      </div>
    </div>
  );
}

function NoiseScreen() {
  return (
    <div className="relative overflow-hidden bg-[#161616]">
      <MenuBar heightClass="h-4" />
      <Toolbar mode="wave" />
      <div className="flex">
        <div className="flex flex-col w-[151px] mr-1 shrink-0">
          <FilesPanel
            tabs={['文件', '标记']}
            columns={['持续时间']}
            files={[
              { name: '女包.mp3 *', values: ['0:28.865'] },
              { name: '喷嚏.mp3 *', values: ['1:36.671'] },
              { name: '无噪录音片段喷样声.wav', values: ['0:18.767'], selected: true, open: true },
            ]}
            scroll="w-9"
          />
          <LoudnessPanel />
          <BottomTabs tabs={['历史记录', '视频']} active={1} />
        </div>
        <WaveEditor
          title="编辑器：无噪录音片段喷样声.wav"
          overview={
            <svg viewBox="0 0 360 14" preserveAspectRatio="none" className="w-full h-full bg-[#f3f3fa]">
              <path d="M0 3.500H360M0 7H360M0 10.500H360" stroke="#777" strokeWidth=".8" />
            </svg>
          }
          ruler={<Ruler labels={range(18).map((i) => `${i + 1}.0`)} tail="w-[5px]" selection={[0, 100]} />}
          view={
            <>
              <svg viewBox="0 0 360 214" preserveAspectRatio="none" className="w-full h-full bg-[#f3f3fc]">
                <LightGrid columns={19} />
                <path d="M0 107H360" stroke="#6f7f78" />
                <path d="M0 53H290M300 53h5M312 53H358M0 161H290M300 161h5M312 161H358" stroke="#273a38" strokeWidth="1.500" />
              </svg>
              <CornerHandle />
            </>
          }
          time="0:00.000"
          dimFrom={3}
          recordActive
          transport="pl-[2px] pr-[8px]"
        />
        <LevelPanel />
      </div>
      <StatusBar left="捕捉噪声样本 完成用时 0.07 秒" values={['44100 Hz • 16 位 • 立体声', '3.18 MB', '0:18.767', '10.93 GB 空闲']} className="pr-[53px]" />
      <NoiseDialog />
    </div>
  );
}

const speech = [
  [0, 1, 1], [2, 0.8, 0.8], [3.5, 0.5, 0.6], [4.5, 0.3, 0.3], [8, 0.06, 0.1], [9, 0.03, 0.03], [14.4, 0.03, 0.03], [14.8, 0.7, 1.4],
  [20.5, 0.7, 1.4], [21, 0.35, 0.7], [25, 0.4, 0.7], [30, 0.5, 0.75], [31, 0.2, 0.65], [33, 0.12, 0.3], [34, 0.35, 0.65],
  [38, 0.3, 0.6], [39, 0.18, 0.4], [42, 0.3, 0.5], [44, 0.2, 0.4], [45, 0.8, 0.5], [46.5, 0.5, 0.35], [48, 0.2, 0.2], [51, 0.25, 0.3],
  [53, 0.15, 0.15], [56, 0.35, 0.4], [60, 0.3, 0.35], [66, 0.25, 0.12], [67, 0.03, 0.03], [74.5, 0.03, 0.03], [75.5, 0.35, 0.3],
  [79, 0.5, 0.5], [82, 0.55, 0.8], [84, 0.2, 0.4], [87, 0.4, 0.7], [89, 0.2, 0.3], [93, 0.35, 0.4], [95, 0.15, 0.15],
  [98, 0.3, 0.3], [104, 0.12, 0.15], [107, 0.15, 0.15], [107.8, 0.5, 1], [109.5, 0.2, 0.3], [113, 0.1, 0.12], [117, 0.2, 0.2],
  [120, 0.45, 0.3], [121.5, 0.3, 0.2], [122.5, 0.03, 0.03], [124, 0.03, 0.03],
];

const longSpeech = range(60).map((i) => {
  const a = i % 9 > 5 || (i > 32 && i < 36) ? 0.15 : 0.3 + 0.7 * rand(i, 4);
  return [i * 5, a, a];
});

function FftScreen() {
  return (
    <div className="relative overflow-hidden bg-[#161616]">
      <MenuBar heightClass="h-3" />
      <Toolbar mode="wave" activeWorkspace={4} />
      <div className="flex">
        <div className="flex flex-col w-[220px] mr-[2px] shrink-0">
          <FilesPanel
            tabs={['文件', '标记', '收藏夹']}
            columns={['持续时间', '采样率', '声道', '位']}
            files={[{ name: '素材 - 访谈录音.mp3', values: ['0:16.604', '44100 Hz', '立体声', '3'], open: true }]}
            scroll="w-[78px]"
            playDim
          />
          <EffectsRack tabs={['效果组', '属性']} source="文件：素材 - 访谈录音.mp3" rows={5} />
          <BottomTabs tabs={['历史记录', '视频']} active={0} />
        </div>
        <WaveEditor
          title="编辑器：素材 - 访谈录音.mp3"
          focused
          overview={
            <svg viewBox="0 0 290 14" preserveAspectRatio="none" className="w-full h-full bg-black">
              <rect x="166" width="124" height="14" fill="#f0f0f6" />
              <clipPath id="before"><rect width="166" height="14" /></clipPath>
              <clipPath id="after"><rect x="166" width="124" height="14" /></clipPath>
              {[4, 10].map((y) => (
                <g key={y}>
                  <path d={envelopePath(longSpeech, y, 2.6, y)} fill="#3ccf8b" clipPath="url(#before)" />
                  <path d={envelopePath(longSpeech, y, 2.6, y)} fill="#333" clipPath="url(#after)" />
                </g>
              ))}
              <rect x=".5" y=".5" width="289" height="13" rx="2" fill="none" stroke="#999" />
            </svg>
          }
          ruler={<Ruler labels={range(16).map((i) => `${i + 1}.0`)} tail="w-[2px]" selection={[57, 100]} marker={99} />}
          view={
            <>
              <svg viewBox="0 0 360 214" preserveAspectRatio="none" className="w-full h-full bg-[#f3f3fc]">
                <LightGrid columns={16} />
                <rect width="205" height="214" fill="#000" />
                {range(10).map((i) => (
                  <path key={i} d={`M${(i + 0.5) * 21.6} 0V214`} stroke="#222" />
                ))}
                <g transform="translate(205 0) scale(1.24 1)" fill="#1f4a38">
                  <path d={envelopePath(speech, 53, 53, 3)} />
                  <path d={envelopePath(speech, 161, 50, 5)} />
                </g>
                <path d="M205 107H360" stroke="#55625c" />
                <path d="M359 0V214" stroke="#c23a3a" />
              </svg>
              <CornerHandle />
              <div className="absolute right-[33px] top-[10px] flex items-center gap-[3px] w-[57px] h-[12px] px-1 bg-[#5b5b5f] text-[#bbb]">
                <VolumeRamp />
                <Knob />
                <span className="text-[#6fa8dc]">+0 dB</span>
                <span className="ml-auto">✦</span>
              </div>
            </>
          }
          time="0:16.604"
          transport="pl-[2px]"
        />
        <LevelPanel />
      </div>
      <StatusBar left="已停止" values={['44100 Hz • 32 位 (浮点) • 立体声', '5.59 MB', '0:16.604', '9.97 GB 空闲']} className="pr-[23px]" />
      <FftDialog />
      <ImeBar className="left-[494px] top-[35px]" />
    </div>
  );
}

const clipEnvelope = [
  [0, 0.3, 0.3], [3, 0.9, 0.9], [7, 0.7, 0.6], [9, 0.15, 0.15], [13, 0.4, 0.4], [15, 0.15, 0.15], [20, 0.4, 0.4], [23, 0.12, 0.12],
  [27, 0.3, 0.3], [28.5, 0.3, 0.3], [29, 1.8, 1.8], [29.8, 0.2, 0.2], [34, 0.2, 0.2], [37, 0.15, 0.15], [41, 1.1, 1], [43, 0.7, 0.6],
  [46, 0.12, 0.12], [50, 0.5, 0.5], [53, 0.12, 0.12], [56, 0.15, 0.1], [60, 0.6, 0.6], [64, 0.4, 0.5], [70, 0.8, 0.7], [75, 0.6, 0.6],
  [78, 0.12, 0.12], [84, 0.15, 0.2], [88, 0.9, 0.8], [90, 0.9, 0.8], [92, 0.2, 0.2], [96, 0.3, 0.3], [99.500, 0.2, 0.2],
  [100, 2, 2], [101, 0.3, 0.3], [106, 0.7, 0.7], [109, 0.3, 0.3], [112, 0.5, 0.5], [116, 0.3, 0.3], [117, 1.6, 1.6], [118, 0.3, 0.3],
  [125, 0.8, 0.7], [128, 0.4, 0.3], [132, 0.9, 0.9], [136, 0.8, 0.8], [140, 0.3, 0.3],
];

function FadeClip() {
  return (
    <div className="flex h-full bg-[#4c4c4c]">
      <div className="flex flex-col w-[48.8%]">
        <div className="flex justify-between h-[6px] px-[2px] bg-[#8fb0a3] text-[4px] leading-[6px] text-white">
          <span>背景原音</span>
          <span>声像 ▾</span>
        </div>
        <svg viewBox="0 0 140 55" preserveAspectRatio="none" className="w-full flex-1 min-h-0 bg-[#1e2422]">
          <path d={envelopePath(clipEnvelope, 13, 10, 6)} fill="#41d391" />
          <path d={envelopePath(clipEnvelope, 41, 10, 8)} fill="#41d391" />
          <path d="M0 13H140M0 41H140" stroke="#41d391" strokeWidth="2" />
          <path d="M0 27H140" stroke="#4c6059" strokeWidth=".7" />
          <path d="M3 20L15 3H45L62 29L78 3H114L140 25" fill="none" stroke="#a39c80" strokeWidth="1" />
          <path d="M0 46H29L53 9L62 27" fill="none" stroke="#cfdcd8" strokeWidth="1.200" />
          <path d="M0 0h5L0 6zM140 0h-5l5 6z" fill="#dfe8e4" />
          <path d="M5 2h6L6 6zM134 2h-5l5 5z" fill="#7d8a86" />
          <circle cx="53" cy="9" r="1.800" fill="#3b8be0" />
        </svg>
      </div>
    </div>
  );
}

const mixTracks = [
  { name: '轨道 1', strip: 'bg-[#2fae74]', stripBody: 'bg-[#4deba5]', dot: 'bg-[#2fae74]' },
  { name: '混响效果', strip: 'bg-[#7a6d4b]', stripBody: 'bg-[#7a6d4b]', dot: 'bg-[#d6a62a]', bus: true },
  { name: '轨道 2', strip: 'bg-[#7c4379]', stripBody: 'bg-[#7c4379]', dot: 'bg-[#c02cc0]' },
  { name: '轨道 3', strip: 'bg-[#845f4c]', stripBody: 'bg-[#845f4c]', dot: 'bg-[#845f4c]', height: 'h-[28px]' },
];

function MixScreen() {
  return (
    <div className="relative overflow-hidden bg-[#161616]">
      <MenuBar heightClass="h-[14px]" />
      <Toolbar mode="multi" />
      <div className="flex">
        <div className="flex flex-col w-[146px] mr-px shrink-0">
          <FilesPanel
            tabs={['文件', '标记']}
            columns={['持续时间']}
            files={[
              { name: '背景原音.wav', values: ['0:14.800'], selected: true },
              { name: '混音效果.sesx *', values: ['0:30.000'], open: true },
              { name: '访谈 44100 1.wav', values: ['0:20.000'] },
              { name: '访谈.wav', values: ['0:20.000'] },
            ]}
            scroll="w-[34px]"
          />
          <EffectsRack tabs={['效果组', '属性', '视频']} toggle source="轨道：轨道 3" rows={3} selected={0} />
          <BottomTabs tabs={['历史记录']} active={-1} />
        </div>
        <MultitrackEditor
          tabs={['编辑器：混音效果.sesx *', '混音器']}
          toolsActive
          surround
          overview={
            <div className="flex flex-1 h-[14px] ml-[2px] bg-[#2c2c2c] border border-x-2 border-[#666] rounded-[3px]">
              <div className="w-[20%] border-r border-[#6e2a2a]" />
              <div className="w-[29%] h-[2px] bg-[#6b7671]" />
            </div>
          }
          ruler={<Ruler labels={range(14).map((i) => `${(i + 1) * 2}.0`)} tail="w-[10px]" marker={19.8} />}
          tracks={mixTracks}
          clip={<FadeClip />}
          listHeight="h-[217px]"
          overlay={<div className="h-full w-[19.8%] border-r border-[#7c2418]" />}
          segments={[
            [26, 'bg-[#5ff0b0]'],
            [25, 'bg-[#8d8864]'],
            [26, 'bg-[#8f6a95]'],
            [12, 'bg-[#8f7472]'],
            [12, 'bg-[#8a5a50]'],
            [25, 'bg-[#4f7578]'],
            [25, 'bg-[#80427c]'],
            [25, 'bg-[#49704f]'],
            [25, 'bg-[#4f5380]'],
          ]}
          time="0:05.951"
        />
        <LevelPanel clipped />
      </div>
      <StatusBar left="已停止" values={['44100 Hz • 32 位混合', '10.74 MB', '0:30.000', '1.79 GB 空闲']} className="pr-[23px]" />
    </div>
  );
}

export default function App() {
  return (
    <div className="w-full bg-white text-[5px] leading-[7px] font-['Liberation_Sans','Noto_Sans_CJK_SC',sans-serif]">
      <MenuScreen />
      <NoiseScreen />
      <FftScreen />
      <MixScreen />
    </div>
  );
}
